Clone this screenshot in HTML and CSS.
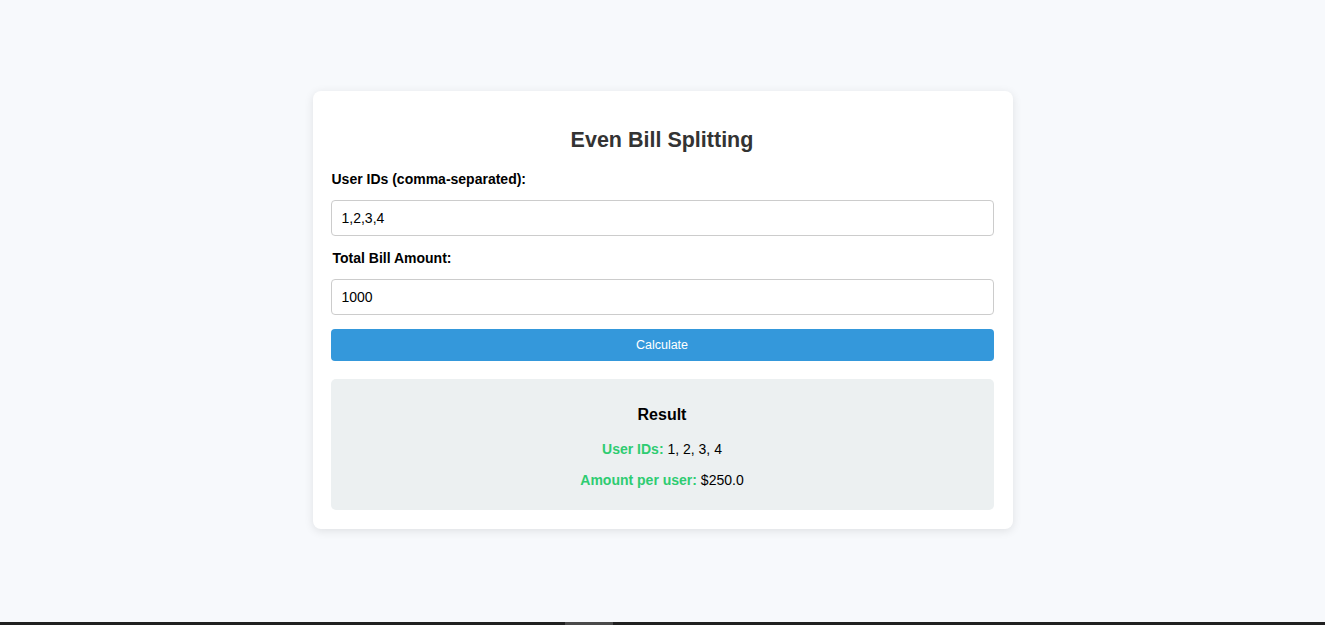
FILE: index.html
```html
<!DOCTYPE html>
<html lang="en">
<head>
<meta charset="utf-8">
<title>Even Bill Splitting</title>
<link rel="stylesheet" href="styles.css">
</head>
<body>
<div class="card">
  <h2 class="title">Even Bill Splitting</h2>
  <label class="label" for="ids">User IDs (comma-separated):</label>
  <input class="field" id="ids" type="text" value="1,2,3,4">
  <label class="label label-2" for="amount">Total Bill Amount:</label>
  <input class="field" id="amount" type="text" value="1000">
  <button class="btn" type="button">Calculate</button>
  <div class="result">
    <h3 class="result-title">Result</h3>
    <p class="result-line"><strong class="key">User IDs:</strong> 1, 2, 3, 4</p>
    <p class="result-line"><strong class="key">Amount per user:</strong> $250.0</p>
  </div>
</div>
<div class="hbar"><div class="hthumb"></div></div>
</body>
</html>
```
FILE: styles.css
```css
* { box-sizing: border-box; }
html, body { margin: 0; padding: 0; }
body {
  background: #f7f9fc;
  font-family: "Liberation Sans", Arial, sans-serif;
  min-height: 100vh;
  display: flex;
  align-items: center;
  justify-content: center;
  padding-bottom: 5px;
}
.card {
  width: 700px;
  background: #fff;
  border-radius: 8px;
  box-shadow: 0 2px 10px rgba(0, 0, 0, 0.1);
  padding: 20px 19px 19px 18px;
  display: flex;
  flex-direction: column;
}
.title {
  margin: 17px 0 18px;
  text-align: center;
  font-size: 21.5px;
  line-height: 25px;
  font-weight: bold;
  color: #333;
}
.label {
  display: block;
  font-size: 14px;
  line-height: 16px;
  font-weight: bold;
  color: #000;
  margin: 0 0 13px 1px;
}
.label-2 { margin-left: 2px; }
.field {
  height: 36px;
  width: 100%;
  border: 1px solid #ccc;
  border-radius: 4px;
  padding: 0 10px;
  font-family: "Liberation Sans", Arial, sans-serif;
  font-size: 14px;
  color: #000;
  margin: 0 0 14px;
  background: #fff;
}
.btn {
  height: 32px;
  width: 100%;
  border: none;
  border-radius: 4px;
  background: #3498db;
  color: #fff;
  font-family: "Liberation Sans", Arial, sans-serif;
  font-size: 12.5px;
  margin: 0 0 18px;
}
.result {
  background: #ecf0f1;
  border-radius: 5px;
  padding: 15px;
  text-align: center;
}
.result-title {
  margin: 12px 0 17px;
  font-size: 16px;
  line-height: 18px;
  font-weight: bold;
  color: #000;
}
.result-line {
  margin: 0 0 15px;
  font-size: 14px;
  line-height: 16px;
  color: #000;
}
.result-line:last-child { margin-bottom: 7px; }
.key { color: #2ecc71; }
.hbar {
  position: fixed;
  left: 0;
  right: 0;
  bottom: 0;
  height: 3px;
  background: #202020;
}
.hthumb {
  position: absolute;
  left: 565px;
  width: 48px;
  top: 0;
  bottom: 0;
  background: #4a4a4a;
}
```
